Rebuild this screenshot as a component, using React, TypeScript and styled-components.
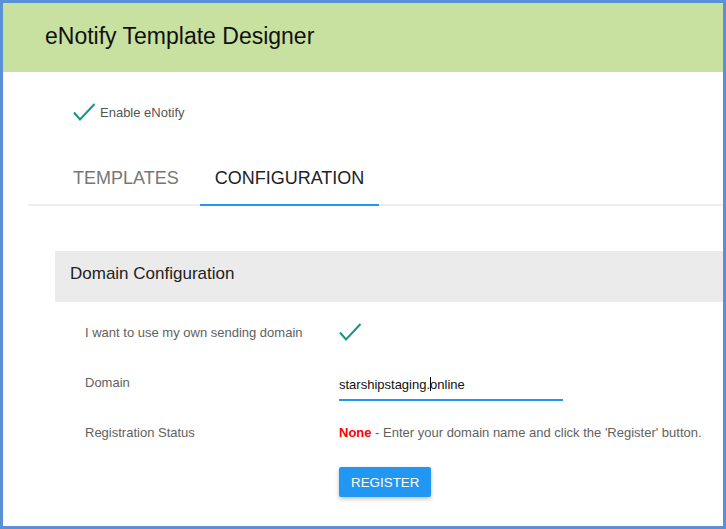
import React from "react";
import styled, { createGlobalStyle } from "styled-components";

const GlobalStyle = createGlobalStyle`
  html, body { margin: 0; padding: 0; background: #fff; }
  body { font-family: "Liberation Sans", Arial, sans-serif; }
  * { box-sizing: border-box; }
`;

const Frame = styled.div`
  width: 726px;
  height: 529px;
  border: 3px solid #5b8fd6;
  background: #fff;
  overflow: hidden;
  display: flex;
  flex-direction: column;
`;

const Header = styled.header`
  height: 69px;
  background: #c8e0a0;
  display: flex;
  align-items: center;
  padding-left: 42px;
  padding-bottom: 2px;
`;

const Title = styled.h1`
  margin: 0;
  font-weight: normal;
  font-size: 23px;
  color: #111;
`;

const EnableRow = styled.div`
  height: 40px;
  margin-top: 20px;
  display: flex;
  align-items: center;
  padding-left: 70px;
  gap: 4px;
  font-size: 13px;
  color: #555;
`;

const TabBar = styled.div`
  margin-top: 22px;
  margin-left: 25px;
  padding-left: 30px;
  display: flex;
  gap: 6px;
  border-bottom: 2px solid #eeeeee;
`;

const Tab = styled.div<{ $active?: boolean }>`
  height: 52px;
  margin-bottom: -2px;
  padding: 0 15px 2px;
  display: flex;
  align-items: center;
  font-size: 18px;
  color: ${(p) => (p.$active ? "#222" : "#777")};
  border-bottom: 2px solid ${(p) => (p.$active ? "#2196f3" : "transparent")};
`;

const Section = styled.section`
  margin-top: 45px;
  margin-left: 52px;
`;

const SectionHeader = styled.div`
  height: 51px;
  background: #ebebeb;
  display: flex;
  align-items: center;
  padding-left: 15px;
  padding-bottom: 5px;
  font-size: 17px;
  color: #222;
`;

const Rows = styled.div`
  padding: 5px 0 0 30px;
  display: flex;
  flex-direction: column;
`;

const Row = styled.div`
  height: 50px;
  display: grid;
  grid-template-columns: 254px 1fr;
  align-items: center;
  font-size: 13px;
`;

const Label = styled.div`
  color: #616161;
`;

const Value = styled.div`
  display: flex;
  align-items: center;
  color: #616161;
`;

const DomainInput = styled.div`
  width: 224px;
  height: 32px;
  margin-top: 6px;
  border-bottom: 2px solid #2196f3;
  display: flex;
  align-items: center;
  font-size: 13px;
  color: #111;
`;

const Caret = styled.span`
  display: inline-block;
  width: 0;
  height: 14px;
  border-left: 1px solid #000;
  margin: 0 -1px 0 0;
`;

const None = styled.span`
  color: #ff0000;
  font-weight: bold;
`;

const ButtonRow = styled.div`
  padding-left: 284px;
  margin-top: 10px;
`;

const RegisterButton = styled.button`
  height: 30px;
  padding: 0 12px;
  border: none;
  border-radius: 2px;
  background: #2196f3;
  color: #fff;
  font-family: "Liberation Sans", Arial, sans-serif;
  font-size: 13.4px;
  box-shadow: 0 2px 4px rgba(0, 0, 0, 0.25);
  cursor: pointer;
`;

const Check = () => (
  <svg width="23" height="19" viewBox="0 0 23 19" fill="none">
    <path d="M1 9.5 L7 16.5 L21.5 1" stroke="#14968a" strokeWidth="2" />
  </svg>
);

export default function App() {
  return (
    <>
      <GlobalStyle />
      <Frame>
        <Header>
          <Title>eNotify Template Designer</Title>
        </Header>
        <EnableRow>
          <Check />
          <span>Enable eNotify</span>
        </EnableRow>
        <TabBar>
          <Tab>TEMPLATES</Tab>
          <Tab $active>CONFIGURATION</Tab>
        </TabBar>
        <Section>
          <SectionHeader>Domain Configuration</SectionHeader>
          <Rows>
            <Row>
              <Label>I want to use my own sending domain</Label>
              <Value>
                <Check />
              </Value>
            </Row>
            <Row>
              <Label>Domain</Label>
              <Value>
                <DomainInput>
                  starshipstaging.<Caret />online
                </DomainInput>
              </Value>
            </Row>
            <Row>
              <Label>Registration Status</Label>
              <Value>
                <span>
                  <None>None</None> - Enter your domain name and click the
                  'Register' button.
                </span>
              </Value>
            </Row>
          </Rows>
          <ButtonRow>
            <RegisterButton>REGISTER</RegisterButton>
          </ButtonRow>
        </Section>
      </Frame>
    </>
  );
}
